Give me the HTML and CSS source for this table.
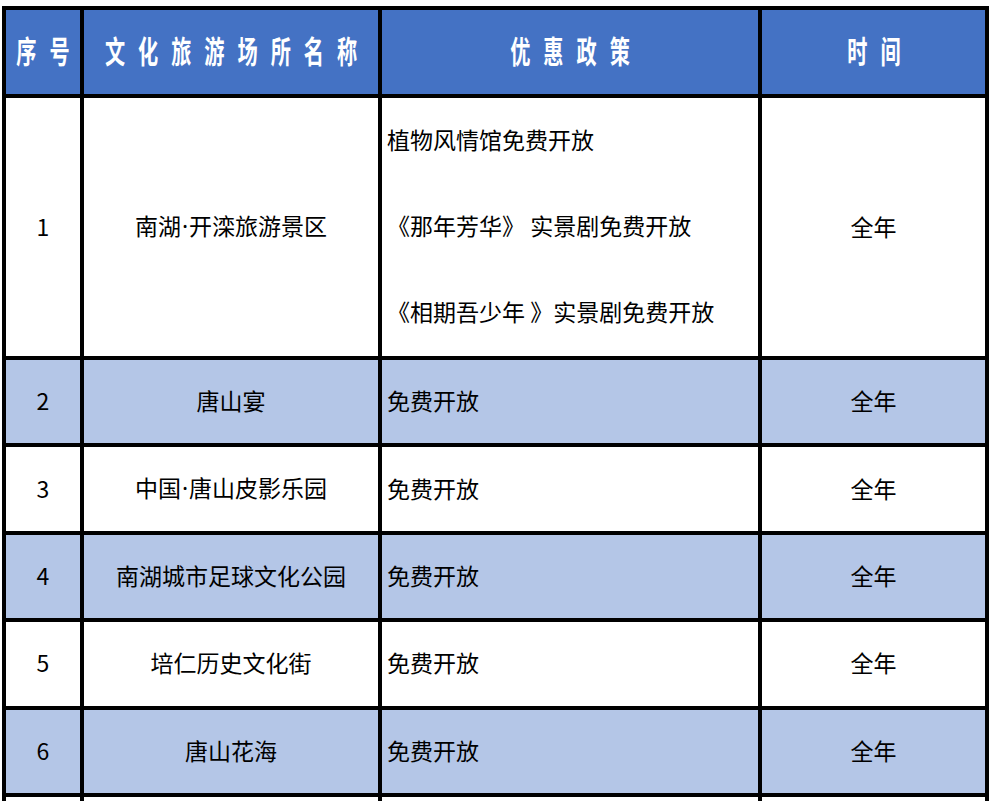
FILE: index.html
```html
<!DOCTYPE html>
<html lang="zh-CN">
<head>
<meta charset="utf-8">
<title>文化旅游场所优惠政策</title>
<link rel="stylesheet" href="styles.css">
</head>
<body>
<div class="sheet">
  <div class="cell head"><span class="ht">序号</span></div>
  <div class="cell head"><span class="ht">文化旅游场所名称</span></div>
  <div class="cell head"><span class="ht">优惠政策</span></div>
  <div class="cell head"><span class="ht">时间</span></div>

  <div class="cell"><span class="tx">1</span></div>
  <div class="cell"><span class="tx">南湖<span class="dot">·</span>开滦旅游景区</span></div>
  <div class="cell policy multi">
    <div class="line">植物风情馆免费开放</div>
    <div class="line">《那年芳华》 实景剧免费开放</div>
    <div class="line">《相期吾少年 》实景剧免费开放</div>
  </div>
  <div class="cell"><span class="tx">全年</span></div>

  <div class="cell alt"><span class="tx">2</span></div>
  <div class="cell alt"><span class="tx">唐山宴</span></div>
  <div class="cell alt policy"><span class="tx">免费开放</span></div>
  <div class="cell alt"><span class="tx">全年</span></div>

  <div class="cell"><span class="tx">3</span></div>
  <div class="cell"><span class="tx">中国<span class="dot">·</span>唐山皮影乐园</span></div>
  <div class="cell policy"><span class="tx">免费开放</span></div>
  <div class="cell"><span class="tx">全年</span></div>

  <div class="cell alt"><span class="tx">4</span></div>
  <div class="cell alt"><span class="tx">南湖城市足球文化公园</span></div>
  <div class="cell alt policy"><span class="tx">免费开放</span></div>
  <div class="cell alt"><span class="tx">全年</span></div>

  <div class="cell"><span class="tx">5</span></div>
  <div class="cell"><span class="tx">培仁历史文化街</span></div>
  <div class="cell policy"><span class="tx">免费开放</span></div>
  <div class="cell"><span class="tx">全年</span></div>

  <div class="cell alt"><span class="tx">6</span></div>
  <div class="cell alt"><span class="tx">唐山花海</span></div>
  <div class="cell alt policy"><span class="tx">免费开放</span></div>
  <div class="cell alt"><span class="tx">全年</span></div>

  <div class="cell"></div>
  <div class="cell"></div>
  <div class="cell policy"></div>
  <div class="cell"></div>
</div>
</body>
</html>
```

FILE: styles.css
```css
html, body {
  margin: 0;
  padding: 0;
  background: #ffffff;
}

body {
  font-family: "Noto Sans CJK SC", "Noto Sans", sans-serif;
  color: #000000;
  overflow: hidden;
}

.sheet {
  display: grid;
  grid-template-columns: 74px 294px 376px 223px;
  grid-template-rows: 84px 258px repeat(5, 83.4px) 83px;
  gap: 4px;
  padding: 4px;
  background: #000000;
  width: max-content;
  margin: 6px 0 0 2px;
}

.cell {
  background: #ffffff;
  display: flex;
  align-items: center;
  justify-content: center;
  font-size: 23px;
  line-height: 1;
  white-space: nowrap;
}

.cell.alt {
  background: #b4c6e7;
}

.cell.head {
  background: #4472c4;
  color: #ffffff;
}

.tx {
  position: relative;
  top: -1px;
}

.dot {
  font-family: "Noto Sans", sans-serif;
  padding: 0 1px;
}

.ht {
  display: inline-block;
  font-size: 31px;
  font-weight: 700;
  letter-spacing: 20px;
  padding-left: 20px;
  transform: translate(0, -3px) scaleX(0.65);
  transform-origin: center;
  white-space: nowrap;
  flex-shrink: 0;
}

.cell.policy {
  justify-content: flex-start;
  padding-left: 5px;
}

.cell.multi {
  flex-direction: column;
  align-items: flex-start;
  justify-content: center;
}

.line {
  line-height: 86px;
  height: 86px;
  position: relative;
  top: -2px;
}
```
